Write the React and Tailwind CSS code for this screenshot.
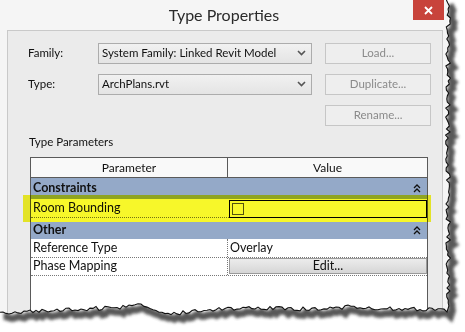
import React from "react";

function rnd(i) {
  const x = Math.sin(i * 12.9898 + 78.233) * 43758.5453;
  return x - Math.floor(x);
}

const bottomCtrl = [
  [0, 313], [30, 311], [80, 309], [110, 308], [145, 305], [160, 312], [175, 314],
  [200, 310], [250, 308], [300, 309], [350, 307], [400, 309], [448, 310],
];
function baseBottom(x) {
  for (let i = 0; i < bottomCtrl.length - 1; i++) {
    const [x0, y0] = bottomCtrl[i];
    const [x1, y1] = bottomCtrl[i + 1];
    if (x >= x0 && x <= x1) return y0 + ((y1 - y0) * (x - x0)) / (x1 - x0);
  }
  return 310;
}

const edge = [];
for (let y = 0; y <= 306; y += 3) edge.push([448 + (rnd(y) - 0.5) * 5, y]);
for (let x = 447; x >= 0; x -= 3) edge.push([x, baseBottom(x) + (rnd(x + 500) - 0.5) * 4]);
const edgeD = edge.map((p, i) => (i ? "L" : "M") + p[0].toFixed(1) + " " + p[1].toFixed(1)).join(" ");
const outsideD = edgeD + " L -5 340 L 470 340 L 470 -5 L 448 -5 Z";

function Chevron() {
  return (
    <svg width="9" height="6" viewBox="0 0 9 6">
      <path d="M1 1 L4.5 4.5 L8 1" fill="none" stroke="#555" strokeWidth="1.6" />
    </svg>
  );
}

function DoubleUp() {
  return (
    <svg width="8" height="9" viewBox="0 0 8 9">
      <path d="M1 4 L4 1 L7 4 M1 8 L4 5 L7 8" fill="none" stroke="#111" strokeWidth="1.3" />
    </svg>
  );
}

function Combo({ text }) {
  return (
    <div className="h-[21px] border border-[#acacac] bg-gradient-to-b from-[#f1f1f1] to-[#e4e4e4] flex items-center pl-[3px] pr-[5px] text-[#111]">
      <span className="flex-1 truncate">{text}</span>
      <Chevron />
    </div>
  );
}

function Btn({ text }) {
  return (
    <div className="h-[21px] border border-[#c6c6c6] bg-[#eeeeee] flex items-center justify-center text-[#8a8a8a]">
      {text}
    </div>
  );
}

function GroupRow({ label, h }) {
  return (
    <div className={`${h} bg-[#94a9c8] flex items-center pl-[2px] pr-[6px] font-bold text-[#111]`}>
      <span className="flex-1">{label}</span>
      <DoubleUp />
    </div>
  );
}

export default function App() {
  return (
    <div className="relative w-[465px] h-[332px] bg-white overflow-hidden font-['Lato','Noto_Sans',sans-serif]">
      <div className="w-[448px] h-[320px] bg-[#f5f5f5] flex flex-col">
        <div className="h-[30px] grid grid-cols-[1fr_auto_1fr]">
          <div />
          <div className="text-[16px] text-[#2a2a2a] leading-[30px]">Type Properties</div>
          <div className="flex justify-end">
            <div className="w-[31px] h-[20px] mr-[4px] bg-[#c8433b] flex items-center justify-center">
              <svg width="9" height="9" viewBox="0 0 9 9">
                <path d="M1 1 L8 8 M8 1 L1 8" stroke="#fff" strokeWidth="1.8" />
              </svg>
            </div>
          </div>
        </div>
        <div className="flex-1 ml-[7px] mr-[5px] border border-b-0 border-[#c9c9c9] bg-[#ebebeb] pt-[11px] pl-[20px] flex flex-col text-[11.5px]">
          <div className="grid grid-cols-[57px_214px_106px] gap-x-[13px] gap-y-[9px] items-center">
            <div className="h-[22px] flex items-center text-[#111]">Family:</div>
            <Combo text="System Family: Linked Revit Model" />
            <Btn text="Load..." />
            <div className="h-[22px] flex items-center text-[#111]">Type:</div>
            <Combo text="ArchPlans.rvt" />
            <Btn text="Duplicate..." />
            <div className="h-[22px]" />
            <div />
            <Btn text="Rename..." />
          </div>
          <div className="mt-[8px] leading-[16px] text-[#111] pl-[1px]">Type Parameters</div>
          <div className="mt-[7px] ml-[2px] w-[398px] flex-1 border border-b-0 border-[#5a5a5a] bg-white flex flex-col text-[12.5px] text-[#111]">
            <div className="h-[20px] shrink-0 flex border-b border-[#5a5a5a] bg-[#f9f9f9] text-[12px]">
              <div className="w-[197px] border-r border-[#5a5a5a] flex items-center justify-center">Parameter</div>
              <div className="flex-1 flex items-center justify-center">Value</div>
            </div>
            <GroupRow label="Constraints" h="h-[21px]" />
            <div className="h-[19px] flex border-b border-dotted border-[#777]">
              <div className="w-[198px] flex items-center pl-[2px]">Room Bounding</div>
              <div className="flex-1 mt-[1px] h-[18px] border border-black flex items-center pl-[2px]">
                <div className="w-[12px] h-[12px] border border-[#555]" />
              </div>
            </div>
            <div className="h-[4px]" />
            <GroupRow label="Other" h="h-[17px]" />
            <div className="h-[19px] flex border-b border-dotted border-[#777]">
              <div className="w-[197px] border-r border-dotted border-[#777] flex items-center pl-[2px]">Reference Type</div>
              <div className="flex-1 flex items-center pl-[2px]">Overlay</div>
            </div>
            <div className="h-[18px] flex border-b border-dotted border-[#777]">
              <div className="w-[197px] border-r border-dotted border-[#777] flex items-center pl-[2px]">Phase Mapping</div>
              <div className="flex-1 pl-[1px]">
                <div className="h-[16px] border border-[#9a9a9a] bg-gradient-to-b from-[#ececec] to-[#d6d6d6] flex items-center justify-center">Edit...</div>
              </div>
            </div>
          </div>
        </div>
      </div>

      <div className="absolute left-[23px] top-[195px] w-[408px] h-[27px] bg-[#f7f72a] mix-blend-multiply" />

      <svg className="absolute inset-0" width="465" height="332" viewBox="0 0 465 332">
        <defs>
          <clipPath id="outside">
            <path d={outsideD} />
          </clipPath>
          <filter id="blur" x="-10%" y="-10%" width="120%" height="120%">
            <feGaussianBlur stdDeviation="1.8" />
          </filter>
        </defs>
        <path d={outsideD} fill="#ffffff" />
        <g clipPath="url(#outside)">
          <path d={edgeD} transform="translate(3.5 4.5)" fill="none" stroke="#3a3a3a" strokeWidth="7" filter="url(#blur)" opacity="0.85" />
        </g>
        <path d={edgeD} fill="none" stroke="#111" strokeWidth="1.1" />
      </svg>
    </div>
  );
}
